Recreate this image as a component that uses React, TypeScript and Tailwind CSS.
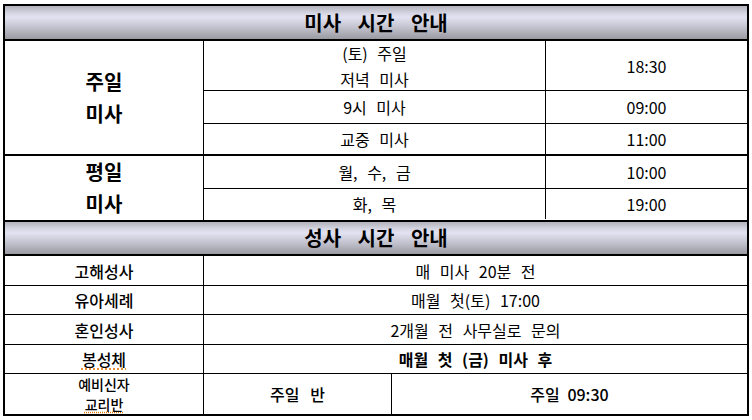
const headBg =
  'bg-[linear-gradient(to_bottom,#b2b2ba_0%,#d6d6e4_22%,#e2e2f2_34%,#c6c6d2_62%,#9a9aa2_100%)]';

const Header = ({ title, h }: { title: string; h: string }) => (
  <div className={`${h} ${headBg} flex items-center justify-center border-b-2 border-black text-[20px] font-bold leading-none [word-spacing:12px]`}>
    {title}
  </div>
);

type MassRow = { name: string[]; time: string; h: string; last?: boolean };

const MassSection = ({ label, rows }: { label: string[]; rows: MassRow[] }) => (
  <div className="flex border-b-2 border-black">
    <div className="w-[199px] border-r border-black flex flex-col items-center justify-center text-[20px] font-bold leading-[32px]">
      {label.map((l) => (
        <span key={l}>{l}</span>
      ))}
    </div>
    <div className="flex-1 flex flex-col">
      {rows.map((r) => (
        <div key={r.time} className={`${r.h} flex ${r.last ? '' : 'border-b border-black'}`}>
          <div className="w-[342px] border-r border-black flex flex-col items-center justify-center leading-[26px] [word-spacing:6px]">
            {r.name.map((n) => (
              <span key={n}>{n}</span>
            ))}
          </div>
          <div className="flex-1 flex items-center justify-center">{r.time}</div>
        </div>
      ))}
    </div>
  </div>
);

const SacRow = ({
  label,
  h,
  children,
  underline,
  last,
}: {
  label: string;
  h: string;
  children: React.ReactNode;
  underline?: boolean;
  last?: boolean;
}) => (
  <div className={`${h} flex ${last ? '' : 'border-b border-black'}`}>
    <div className="w-[199px] border-r border-black flex items-center justify-center font-medium">
      <span className={underline ? 'underline decoration-dotted decoration-[#e07800] underline-offset-[3px]' : ''}>{label}</span>
    </div>
    <div className="flex-1 flex items-center justify-center [word-spacing:6px]">{children}</div>
  </div>
);

export default function App() {
  return (
    <div className="min-h-screen bg-white pt-[4px] pl-[3px] font-['Noto_Sans_CJK_KR',sans-serif] text-[16px] text-black">
      <div className="w-[746px] border-2 border-black">
        <Header title="미사 시간 안내" h="h-[35px]" />
        <MassSection
          label={['주일', '미사']}
          rows={[
            { name: ['(토) 주일', '저녁 미사'], time: '18:30', h: 'h-[50px]' },
            { name: ['9시 미사'], time: '09:00', h: 'h-[33px]' },
            { name: ['교중 미사'], time: '11:00', h: 'h-[30px]', last: true },
          ]}
        />
        <MassSection
          label={['평일', '미사']}
          rows={[
            { name: ['월, 수, 금'], time: '10:00', h: 'h-[33px]' },
            { name: ['화, 목'], time: '19:00', h: 'h-[30px]', last: true },
          ]}
        />
        <Header title="성사 시간 안내" h="h-[34px]" />
        <SacRow label="고해성사" h="h-[30px]">매 미사 20분 전</SacRow>
        <SacRow label="유아세례" h="h-[29px]">매월 첫(토) 17:00</SacRow>
        <SacRow label="혼인성사" h="h-[30px]">2개월 전 사무실로 문의</SacRow>
        <SacRow label="봉성체" h="h-[29px]" underline>
          <span className="font-bold">매월 첫 (금) 미사 후</span>
        </SacRow>
        <div className="h-[40px] flex">
          <div className="w-[199px] border-r border-black flex flex-col items-center justify-center text-[14px] font-medium leading-[20px]">
            <span>예비신자</span>
            <span className="underline decoration-dotted decoration-[#e07800] underline-offset-[2px]">교리반</span>
          </div>
          <div className="w-[188px] border-r border-black flex items-center justify-center font-medium [word-spacing:7px]">
            주일 반
          </div>
          <div className="flex-1 flex items-center justify-center font-medium [word-spacing:4px]">주일 09:30</div>
        </div>
      </div>
    </div>
  );
}
